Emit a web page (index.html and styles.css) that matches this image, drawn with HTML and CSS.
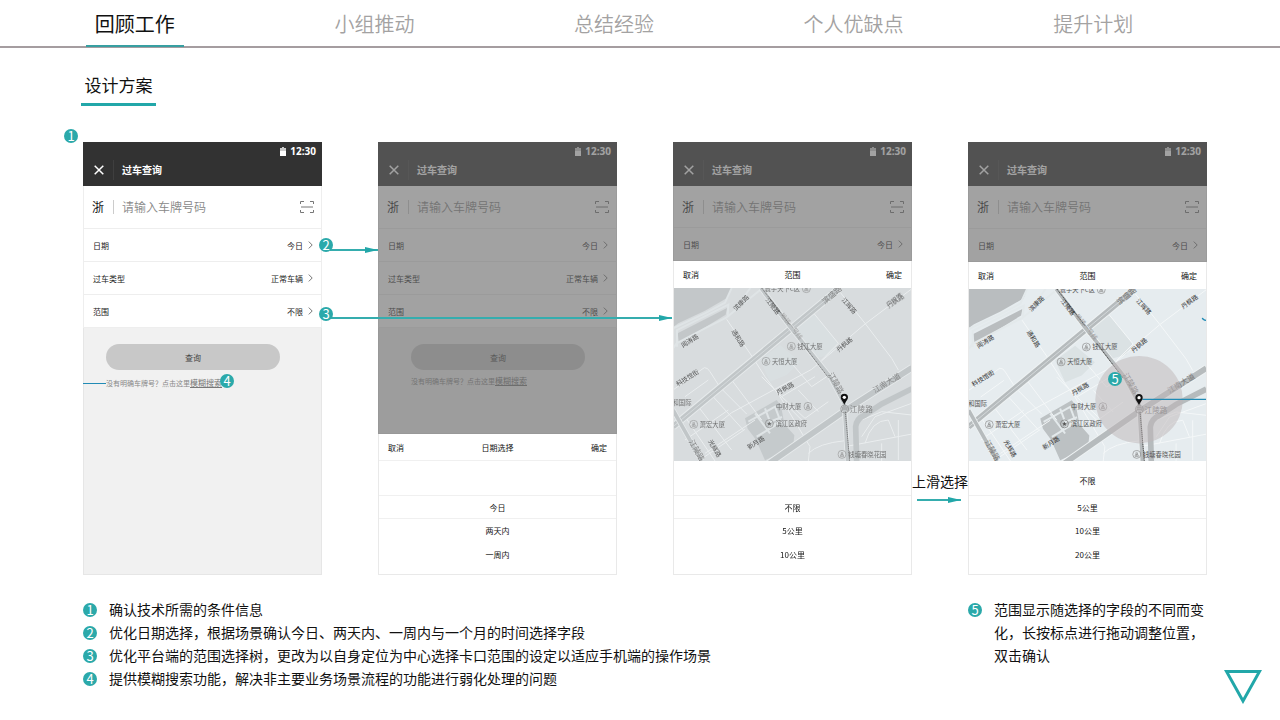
FILE: index.html
```html
<!DOCTYPE html>
<html lang="zh-CN">
<head>
<meta charset="utf-8">
<meta name="viewport" content="width=device-width, initial-scale=1">
<title>设计方案</title>
<link rel="stylesheet" href="styles.css">
</head>
<body>
<svg class="defs" aria-hidden="true">
  <defs>
    <symbol id="close" viewBox="0 0 10 10"><path d="M.7.7l8.6 8.6M9.3.7L.7 9.3" fill="none" stroke="currentColor" stroke-width="1.5"/></symbol>
    <symbol id="battery" viewBox="0 0 6 9"><path d="M2 0h2v1h2v8H0V1h2z" fill="#fff" opacity=".75"/><path d="M0 4h6v5H0z" fill="#fff"/></symbol>
    <symbol id="scan" viewBox="0 0 14 12"><path d="M.5 3V.5H4M10 .5h3.500V3M.5 9v2.500H4M10 11.500h3.500V9M1 6h12" fill="none" stroke="#777" stroke-width="1"/></symbol>
    <symbol id="chev" viewBox="0 0 5 8"><path d="M.8.6L4.200 4 .8 7.400" fill="none" stroke="#777" stroke-width="1"/></symbol>
    <symbol id="pin" viewBox="0 0 24 36"><path d="M12 35C9 25 1 20 1 12a11 11 0 0 1 22 0c0 8-8 13-11 23z" fill="#111"/><circle cx="12" cy="12" r="5" fill="#fff"/></symbol>
    <symbol id="tower" viewBox="0 0 28 28"><circle cx="14" cy="14" r="12" fill="none" stroke="currentColor" stroke-width="2"/><path d="M8 20h12M9 19l2-5h6l2 5M12 14V9l2-2 2 2v5M14 14v5" fill="none" stroke="currentColor" stroke-width="2"/></symbol>
    <symbol id="roads" viewBox="24 24 717 519">
      <path class="water" d="M24 24H200L190 52 120 92 40 130 24 142zM38 160L186 84 182 104 42 190z"/>
      <path class="block" d="M385 130L440 92 520 190 500 222 450 236zM285 240l60-45 60 50 -40 40-50 20z"/>
      <path class="shade" d="M240 415L335 360 348 378 358 432 388 466 384 502 300 541 272 478 248 446z"/>
      <path class="lane" d="M24 145L120 100 180 68 200 24M24 205L35 190 120 145 185 112 290 26M36 200V150L190 74 188 110M256 24L230 60M250 425L330 380 345 420 300 455 275 470M270 400l45 60M300 385l15 40 36-14M300 455l50-30"/>
      <path class="minor" d="M24 330L118 263Q128 262 135 275L165 322 245 402M185 118L265 235 300 290 345 350 420 475 435 500 430 543M741 26L600 132 440 268 200 398 160 430M520 30L600 130 680 235 700 270M440 92L520 190 470 240M100 543L240 448M60 410L150 543M100 380L200 510M140 345L235 450M60 480L190 390M120 520L270 420M130 300L60 350M200 300L290 420M265 235l60-45M290 290l60 60 100-60M380 250l60 70 45-30M350 350l70 65 70-50M375 385l50 50M400 330l60 65M430 520Q460 490 540 482M540 500L741 462M590 470l40-60 110-40M600 490q20-70 70-70l20 50M650 490v53M700 420v120M590 420l60-25 90 10"/>
      <path class="casing wide" d="M24 440L520 28"/><path class="major wide" d="M24 440L520 28"/><path class="line" d="M24 440L520 28"/>
      <path class="casing wide" d="M290 566L541 391 741 263"/><path class="major wide" d="M290 566L541 391 741 263"/>
      <path class="major wide" d="M575 545L572 440Q575 415 600 405L650 372 741 326"/>
      <path class="casing" d="M24 390L110 543"/><path class="major" d="M24 390L110 543"/>
      <path class="casing" d="M288 24L375 140 495 290 538 370 548 543"/><path class="major" d="M288 24L375 140 495 290 538 370 548 543"/>
      <path class="metro" d="M290 24L375 135M412 190L490 293M541 395L554 543"/>
    </symbol>
  </defs>
</svg>

<header class="topbar">
  <nav class="tabs">
    <a class="tab active" href="#review"><span>回顾工作</span></a>
    <a class="tab" href="#team"><span>小组推动</span></a>
    <a class="tab" href="#summary"><span>总结经验</span></a>
    <a class="tab" href="#self"><span>个人优缺点</span></a>
    <a class="tab" href="#plan"><span>提升计划</span></a>
  </nav>
</header>

<main class="page" id="review">
  <h1 class="title">设计方案</h1>

  <div class="phones">
    <section class="phone">
      <div class="screen">
        <div class="bar">
          <div class="status"><svg class="bat"><use href="#battery"/></svg>12:30</div>
          <div class="head"><button class="x" aria-label="关闭"><svg><use href="#close"/></svg></button><h2>过车查询</h2></div>
        </div>
        <div class="search"><label for="p1">浙</label><input id="p1" type="text" placeholder="请输入车牌号码"><svg><use href="#scan"/></svg></div>
        <button class="row"><span>日期</span><span class="val">今日</span><svg><use href="#chev"/></svg></button>
        <button class="row"><span>过车类型</span><span class="val">正常车辆</span><svg><use href="#chev"/></svg></button>
        <button class="row"><span>范围</span><span class="val">不限</span><svg><use href="#chev"/></svg></button>
        <div class="rest first">
          <button class="query">查询</button>
          <p class="hint">没有明确车牌号？点击这里<a href="#fuzzy">模糊搜索</a></p>
        </div>
      </div>
      <span class="badge n1">1</span><span class="badge n2">2</span><span class="badge n3">3</span><span class="badge n4">4</span>
      <i class="blue"></i>
      <i class="arrow a2"></i><i class="arrow a3"></i>
    </section>

    <section class="phone">
      <div class="screen dim">
        <div class="bar">
          <div class="status"><svg class="bat"><use href="#battery"/></svg>12:30</div>
          <div class="head"><button class="x" aria-label="关闭"><svg><use href="#close"/></svg></button><h2>过车查询</h2></div>
        </div>
        <div class="search"><label for="p2">浙</label><input id="p2" type="text" placeholder="请输入车牌号码"><svg><use href="#scan"/></svg></div>
        <button class="row"><span>日期</span><span class="val">今日</span><svg><use href="#chev"/></svg></button>
        <button class="row"><span>过车类型</span><span class="val">正常车辆</span><svg><use href="#chev"/></svg></button>
        <button class="row"><span>范围</span><span class="val">不限</span><svg><use href="#chev"/></svg></button>
        <div class="rest second">
          <button class="query">查询</button>
          <p class="hint">没有明确车牌号？点击这里<a href="#fuzzy">模糊搜索</a></p>
        </div>
      </div>
      <div class="sheet">
        <div class="sheethead ruled"><button>取消</button><h3>日期选择</h3><button>确定</button></div>
        <ul class="options"><li class="lead-row"></li><li class="picked">今日</li><li>两天内</li><li>一周内</li></ul>
      </div>
    </section>

    <section class="phone">
      <div class="screen dim short tight">
        <div class="bar">
          <div class="status"><svg class="bat"><use href="#battery"/></svg>12:30</div>
          <div class="head"><button class="x" aria-label="关闭"><svg><use href="#close"/></svg></button><h2>过车查询</h2></div>
        </div>
        <div class="search"><label for="p3">浙</label><input id="p3" type="text" placeholder="请输入车牌号码"><svg><use href="#scan"/></svg></div>
        <button class="row"><span>日期</span><span class="val">今日</span><svg><use href="#chev"/></svg></button>
      </div>
      <div class="sheet">
        <div class="sheethead"><button>取消</button><h3>范围</h3><button>确定</button></div>
        <svg class="map faded" viewBox="24 24 717 519" preserveAspectRatio="xMidYMid slice">
          <use href="#roads" x="24" y="24" width="717" height="519"/>
          <g class="labels">
            <text x="352" y="27">寰宇天下C区</text><text x="435" y="199">钱江大厦</text><text x="359" y="244">天恒大厦</text><text x="371" y="379">中财大厦</text><text x="142" y="433">萧宏大厦</text><text x="379" y="431">滨江区政府</text><text x="607" y="523">钱塘春晓花园</text><text x="51" y="369">和国际</text>
            <g class="big"><text x="589" y="387">江陵路</text><text transform="translate(664 307) rotate(-31)">江南大道</text><text transform="translate(499 43) rotate(-40)">滨盛路</text><text transform="translate(515 308) rotate(60)">江陵路</text><text transform="translate(97 510) rotate(60)">江陵路</text></g>
            <g class="street"><text transform="translate(228 68) rotate(-45)">滨康路</text><text transform="translate(74 182) rotate(-32)">闻涛路</text><text transform="translate(220 174) rotate(58)">通和路</text><text transform="translate(67 293) rotate(-32)">科技馆街</text><text transform="translate(324 78) rotate(52)">江陵路</text><text transform="translate(553 77) rotate(48)">江晖路</text><text transform="translate(690 62) rotate(-36)">丹枫路</text><text transform="translate(538 193) rotate(-40)">丹枫路</text><text transform="translate(360 325) rotate(-30)">丹枫路</text><text transform="translate(272 488) rotate(-32)">新月路</text><text transform="translate(150 505) rotate(60)">光辉路</text></g>
            <text class="vague" transform="translate(380 138) rotate(52)">地铁一号线</text>
            <use href="#tower" x="410" y="12" width="28" height="28"/><use href="#tower" x="365" y="185" width="28" height="28"/><use href="#tower" x="289" y="230" width="28" height="28"/><use href="#tower" x="415" y="365" width="28" height="28"/><use href="#tower" x="72" y="419" width="28" height="28"/><use href="#tower" x="517" y="509" width="28" height="28"/>
            <g class="gov"><circle cx="313" cy="431" r="12"/><path d="M313 424l2 5 5 0-4 3 2 5-5-3-5 3 2-5-4-3 5 0z"/></g>
            <g class="station"><circle cx="539" cy="387" r="12"/><path d="M532 393v-12h14v12M532 387h14"/></g>
          </g>
          <use href="#pin" x="526" y="340" width="24" height="36"/>
        </svg>
        <ul class="options"><li class="lead-row"></li><li class="picked">不限</li><li>5公里</li><li>10公里</li></ul>
      </div>
      <div class="slide"><span>上滑选择</span><i class="arrow"></i></div>
    </section>

    <section class="phone">
      <div class="screen dim short">
        <div class="bar">
          <div class="status"><svg class="bat"><use href="#battery"/></svg>12:30</div>
          <div class="head"><button class="x" aria-label="关闭"><svg><use href="#close"/></svg></button><h2>过车查询</h2></div>
        </div>
        <div class="search"><label for="p4">浙</label><input id="p4" type="text" placeholder="请输入车牌号码"><svg><use href="#scan"/></svg></div>
        <button class="row"><span>日期</span><span class="val">今日</span><svg><use href="#chev"/></svg></button>
      </div>
      <div class="sheet">
        <div class="sheethead"><button>取消</button><h3>范围</h3><button>确定</button></div>
        <svg class="map" viewBox="24 24 717 519" preserveAspectRatio="xMidYMid slice">
          <use href="#roads" x="24" y="24" width="717" height="519"/>
          <g class="labels">
            <text x="352" y="27">寰宇天下C区</text><text x="435" y="199">钱江大厦</text><text x="359" y="244">天恒大厦</text><text x="371" y="379">中财大厦</text><text x="142" y="433">萧宏大厦</text><text x="379" y="431">滨江区政府</text><text x="607" y="523">钱塘春晓花园</text><text x="51" y="369">和国际</text>
            <g class="big"><text x="589" y="387">江陵路</text><text transform="translate(664 307) rotate(-31)">江南大道</text><text transform="translate(499 43) rotate(-40)">滨盛路</text><text transform="translate(515 308) rotate(60)">江陵路</text><text transform="translate(97 510) rotate(60)">江陵路</text></g>
            <g class="street"><text transform="translate(228 68) rotate(-45)">滨康路</text><text transform="translate(74 182) rotate(-32)">闻涛路</text><text transform="translate(220 174) rotate(58)">通和路</text><text transform="translate(67 293) rotate(-32)">科技馆街</text><text transform="translate(324 78) rotate(52)">江陵路</text><text transform="translate(553 77) rotate(48)">江晖路</text><text transform="translate(690 62) rotate(-36)">丹枫路</text><text transform="translate(538 193) rotate(-40)">丹枫路</text><text transform="translate(360 325) rotate(-30)">丹枫路</text><text transform="translate(272 488) rotate(-32)">新月路</text><text transform="translate(150 505) rotate(60)">光辉路</text></g>
            <text class="vague" transform="translate(380 138) rotate(52)">地铁一号线</text>
            <use href="#tower" x="410" y="12" width="28" height="28"/><use href="#tower" x="365" y="185" width="28" height="28"/><use href="#tower" x="289" y="230" width="28" height="28"/><use href="#tower" x="415" y="365" width="28" height="28"/><use href="#tower" x="72" y="419" width="28" height="28"/><use href="#tower" x="517" y="509" width="28" height="28"/>
            <g class="gov"><circle cx="313" cy="431" r="12"/><path d="M313 424l2 5 5 0-4 3 2 5-5-3-5 3 2-5-4-3 5 0z"/></g>
            <g class="station"><circle cx="539" cy="387" r="12"/><path d="M532 393v-12h14v12M532 387h14"/></g>
          </g>
          <circle class="range" cx="538" cy="358" r="132"/>
          <path class="guide" d="M548 357H745M729 111Q731 119 745 119"/>
          <use href="#pin" x="526" y="340" width="24" height="36"/>
        </svg>
        <ul class="options"><li class="lead-row">不限</li><li class="picked">5公里</li><li>10公里</li><li>20公里</li></ul>
      </div>
      <span class="badge n5">5</span>
    </section>
  </div>

  <div class="notes">
    <ul class="notelist">
      <li><span class="badge">1</span>确认技术所需的条件信息</li>
      <li><span class="badge">2</span>优化日期选择，根据场景确认今日、两天内、一周内与一个月的时间选择字段</li>
      <li><span class="badge">3</span>优化平台端的范围选择树，更改为以自身定位为中心选择卡口范围的设定以适应手机端的操作场景</li>
      <li><span class="badge">4</span>提供模糊搜索功能，解决非主要业务场景流程的功能进行弱化处理的问题</li>
    </ul>
    <ul class="notelist side">
      <li><span class="badge">5</span><p>范围显示随选择的字段的不同而变化，长按标点进行拖动调整位置，双击确认</p></li>
    </ul>
  </div>
</main>
<button class="next" aria-label="下一页"><svg viewBox="0 0 38 34"><path d="M2.500 1.500H35.500L19 31z" fill="none" stroke="#22a7a9" stroke-width="3"/></svg></button>
</body>
</html>
```

FILE: styles.css
```css
* { box-sizing: border-box; }
body {
  margin: 0;
  background: #fff;
  color: #111;
  font-family: "Noto Sans CJK SC", "Noto Sans", sans-serif;
}
h1, h2, h3, p, ul { margin: 0; padding: 0; font-weight: 400; }
ul { list-style: none; }
button {
  margin: 0; padding: 0; border: 0;
  background: none; color: inherit; font: inherit;
}
svg { display: block; flex: none; }
.defs { position: absolute; width: 0; height: 0; }

.topbar { border-bottom: 2px solid #a59da0; }
.tabs {
  display: grid;
  grid-template-columns: repeat(5, 1fr);
  padding: 0 67px 0 15px;
}
.tab {
  display: flex;
  justify-content: center;
  height: 46px;
  color: #a3a2a2;
  font-size: 20px;
  font-weight: 350;
  line-height: 47px;
  text-decoration: none;
}
.tab span { padding: 0 9px; }
.tab.active { color: #111; font-weight: 400; }
.tab.active span { height: 47px; border-bottom: 2px solid #379fa1; }

.page { padding: 23px 73px 0 83px; }
.title {
  width: 75px;
  margin-left: -2px;
  padding-bottom: 4px;
  border-bottom: 3px solid #22a7a9;
  font-size: 17px;
  line-height: 28px;
  text-align: center;
}

.phones {
  display: grid;
  grid-template-columns: repeat(4, 1fr);
  gap: 56px;
  margin-top: 36px;
}
.phone {
  position: relative;
  display: flex;
  flex-direction: column;
  min-height: 432px;
  font-size: 8px;
}
.screen {
  position: relative;
  display: flex;
  flex: 1;
  flex-direction: column;
}
.screen.short { flex: none; }
.dim::after {
  content: "";
  position: absolute;
  inset: 0;
  background: rgba(103, 103, 103, .61);
}
.bar { height: 44px; background: #323232; color: #fff; }
.status {
  display: flex;
  align-items: center;
  justify-content: flex-end;
  gap: 4px;
  height: 18px;
  padding-right: 6px;
  font: 700 10px/18px "Open Sans", sans-serif;
}
.bat { width: 6px; height: 9px; }
.head { display: flex; align-items: center; height: 20px; }
.x {
  display: flex;
  align-items: center;
  width: 31px;
  height: 20px;
  padding-left: 11px;
  border-right: 1px solid #3f3f3f;
}
.x svg { width: 10px; height: 10px; }
.head h2 { padding-left: 8px; font-size: 10px; font-weight: 700; line-height: 20px; }
.search {
  display: flex;
  align-items: center;
  height: 43px;
  padding: 0 7px 0 8px;
  border: 1px solid #eee;
  border-top: 0;
  background: #fff;
  font-size: 12px;
}
.tight .search { height: 42px; }
.search label { width: 22px; border-right: 1px solid #ccc; line-height: 14px; }
.search input {
  flex: 1;
  min-width: 0;
  padding: 0 0 0 8px;
  border: 0;
  background: none;
  font: 350 12px/20px "Noto Sans CJK SC", sans-serif;
}
.search input::placeholder { color: #888; opacity: 1; }
.search svg { width: 14px; height: 12px; }
.row {
  display: flex;
  align-items: center;
  height: 33px;
  padding: 0 8px 0 9px;
  border: 1px solid #eee;
  border-top: 0;
  background: #fff;
  color: #222;
  text-align: left;
}
.val { flex: 1; padding-right: 5px; text-align: right; }
.row svg { width: 5px; height: 8px; }
.rest { flex: 1; border: 1px solid #e6e6e6; border-top: 0; background: #f1f1f1; }
.first { padding: 16px 41px 0 22px; }
.second { padding: 16px 31px 0 32px; }
.query {
  display: block;
  width: 100%;
  height: 26px;
  border-radius: 13px;
  background: #c8c8c8;
  color: #444;
}
.hint { color: #888; font-size: 7px; line-height: 12px; white-space: nowrap; }
.first .hint { padding-top: 7px; }
.second .hint { padding-top: 5px; }
.hint a { color: #777; font-size: 8px; }

.sheet { border: 1px solid #e9e9e9; border-top: 0; background: #fff; }
.sheethead {
  display: grid;
  grid-template-columns: 1fr 1fr 1fr;
  align-items: center;
  height: 27px;
  padding: 0 9px;
}
.ruled { border-bottom: 1px solid #f0f0f0; }
.sheethead h3 { font-size: 8px; text-align: center; }
.sheethead button { text-align: left; }
.sheethead button:last-child { text-align: right; }
.options { padding-bottom: 7px; }
.options li { height: 24px; line-height: 24px; text-align: center; }
.options .lead-row { height: 34px; padding-top: 8px; }
.options .picked { border: 1px solid #f0f0f0; border-width: 1px 0; }

.map { width: 100%; height: 172px; background: #e6ecef; }
.map.faded { height: 173px; background: #d8dcde; }
.water { fill: #b9bdbf; }
.block { fill: #dbe2e4; }
.shade { fill: #bcc1c3; }
.lane, .minor, .casing, .major, .line, .metro { fill: none; }
.lane { stroke: #e3e9eb; stroke-width: 6; }
.minor { stroke: #f4f7f8; stroke-width: 3; }
.casing { stroke: #eef2f3; stroke-width: 16; }
.major { stroke: #b6bbbd; stroke-width: 11; }
.casing.wide { stroke-width: 23; }
.major.wide { stroke-width: 17; }
.line { stroke: #e3e8ea; stroke-width: 2; }
.metro { stroke: #444; stroke-width: 3; stroke-dasharray: 4 2; }
.faded > use:first-child { opacity: .65; }
.faded .labels { opacity: .8; }
.labels { color: #888; fill: #555; font-size: 19px; }
.labels text { text-anchor: middle; dominant-baseline: central; }
.labels .big { fill: #777; font-size: 23px; }
.labels .street { fill: #333; font-size: 19px; }
.labels .vague { fill: #999; }
.gov circle, .station circle, .station path { fill: none; stroke: #777; stroke-width: 2; }
.range { fill: #beb6b7; opacity: .5; }
.guide { fill: none; stroke: #218bb5; stroke-width: 4; }

.badge {
  display: inline-block;
  flex: none;
  width: 14px;
  height: 14px;
  border-radius: 50%;
  background: #2ba9aa;
  color: #fff;
  font-size: 13px;
  line-height: 14px;
  text-align: center;
}
.phone > .badge { position: absolute; z-index: 3; }
.n1 { left: -19px; top: -13px; }
.n2 { left: 236px; top: 96px; }
.n3 { left: 236px; top: 165px; }
.n4 { left: 137px; top: 232px; }
.n5 { left: 140px; top: 230px; }
.blue { position: absolute; left: 0; top: 241px; width: 23px; height: 1px; background: #218bb5; }
.arrow { display: block; height: 2px; background: #35adae; }
.arrow::after {
  content: "";
  position: absolute;
  right: 0;
  margin-top: -2px;
  border: 3px solid transparent;
  border-left: 13px solid #22a7a9;
  border-right: 0;
}
.phone > .arrow { position: absolute; z-index: 2; left: 247px; }
.a2 { top: 107px; width: 48px; }
.a3 { top: 175px; width: 342px; }
.slide {
  position: absolute;
  left: 100%;
  top: 328px;
  width: 56px;
  font-size: 14px;
  line-height: 22px;
  text-align: center;
  white-space: nowrap;
}
.slide .arrow { position: relative; width: 44px; margin: 7px 0 0 5px; }

.notes {
  display: flex;
  justify-content: space-between;
  padding-top: 23px;
}
.notelist { font-size: 14px; line-height: 23px; }
.notelist li { display: flex; gap: 12px; }
.notelist .badge { margin-top: 5px; }
.side { width: 239px; }
.next { position: absolute; right: 18px; bottom: 16px; width: 38px; height: 34px; }
```
